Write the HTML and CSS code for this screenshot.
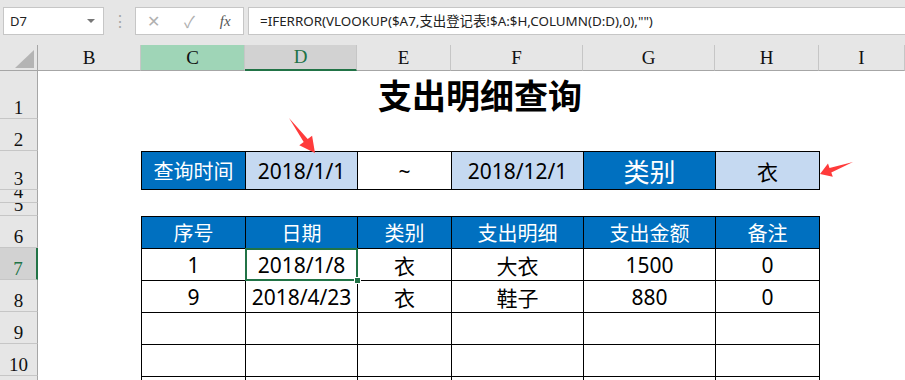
FILE: index.html
```html
<!DOCTYPE html>
<html lang="zh-CN">
<head>
    <meta charset="UTF-8">
    <meta name="viewport" content="width=device-width, initial-scale=1.0">
    <title>支出明细查询</title>
    <link rel="stylesheet" href="styles.css">
</head>
<body>
    <div class="toolbar">
        <div class="name-box">D7<span class="caret"></span></div>
        <div class="grip">⋮</div>
        <div class="fx-box">
            <span class="btn">✕</span>
            <span class="btn">✓</span>
            <span class="btn fx">fx</span>
        </div>
        <div class="formula">=IFERROR(VLOOKUP($A7,支出登记表!$A:$H,COLUMN(D:D),0),"")</div>
    </div>

    <div class="sheet">
        <div class="corner">
            <svg width="37" height="25" viewBox="0 0 37 25"><polygon points="34,5 34,23 15,23" fill="#b4b4b4"/></svg>
        </div>

        <div class="col-heads">
            <div class="col-head w-b">B</div>
            <div class="col-head w-c hover">C</div>
            <div class="col-head w-d sel">D</div>
            <div class="col-head w-e">E</div>
            <div class="col-head w-f">F</div>
            <div class="col-head w-g">G</div>
            <div class="col-head w-h">H</div>
            <div class="col-head w-i">I</div>
        </div>

        <div class="row-heads">
            <div class="row-head h48">1</div>
            <div class="row-head h32">2</div>
            <div class="row-head h39">3</div>
            <div class="row-head h13">4</div>
            <div class="row-head h13">5</div>
            <div class="row-head h32">6</div>
            <div class="row-head h32 sel">7</div>
            <div class="row-head h32">8</div>
            <div class="row-head h32">9</div>
            <div class="row-head h32">10</div>
            <div class="row-head h32"></div>
        </div>

        <div class="cells">
            <h1 class="title">支出明细查询</h1>

            <div class="query">
                <div class="cell blue">查询时间</div>
                <div class="cell pale">2018/1/1</div>
                <div class="cell">~</div>
                <div class="cell pale">2018/12/1</div>
                <div class="cell blue big">类别</div>
                <div class="cell pale">衣</div>
            </div>

            <div class="list">
                <div class="cell blue">序号</div>
                <div class="cell blue">日期</div>
                <div class="cell blue">类别</div>
                <div class="cell blue">支出明细</div>
                <div class="cell blue">支出金额</div>
                <div class="cell blue">备注</div>

                <div class="cell">1</div>
                <div class="cell cur">2018/1/8</div>
                <div class="cell">衣</div>
                <div class="cell">大衣</div>
                <div class="cell">1500</div>
                <div class="cell">0</div>

                <div class="cell">9</div>
                <div class="cell">2018/4/23</div>
                <div class="cell">衣</div>
                <div class="cell">鞋子</div>
                <div class="cell">880</div>
                <div class="cell">0</div>

                <div class="cell"></div><div class="cell"></div><div class="cell"></div>
                <div class="cell"></div><div class="cell"></div><div class="cell"></div>

                <div class="cell"></div><div class="cell"></div><div class="cell"></div>
                <div class="cell"></div><div class="cell"></div><div class="cell"></div>

                <div class="cell"></div><div class="cell"></div><div class="cell"></div>
                <div class="cell"></div><div class="cell"></div><div class="cell"></div>
            </div>
        </div>
    </div>

    <!-- red pointer arrows drawn over the sheet -->
    <svg class="marks" width="905" height="380" viewBox="0 0 905 380">
        <polygon points="289,118 307.7,139 312.1,135.7 315,153 299.3,145.3 303.7,142" />
        <polygon points="853,162 829.5,167.9 828,163.6 820,174 832.8,176.8 831.3,172.6" />
    </svg>
</body>
</html>
```

FILE: styles.css
```css
body {
    margin: 0;
    width: 905px;
    height: 380px;
    overflow: hidden;
    position: relative;
    background: #fff;
    font-family: "Noto Sans", "Noto Sans CJK SC", sans-serif;
}

/* formula bar */
.toolbar {
    height: 45px;
    box-sizing: border-box;
    padding: 7px 0 0 3px;
    background: #e6e6e6;
    display: flex;
    align-items: flex-start;
}
.name-box {
    width: 101px;
    height: 28px;
    box-sizing: border-box;
    border: 1px solid #c6c6c6;
    background: #fff;
    display: flex;
    align-items: center;
    justify-content: space-between;
    padding: 0 8px 0 6px;
    font-size: 13px;
    color: #222;
}
.caret {
    border-left: 4px solid transparent;
    border-right: 4px solid transparent;
    border-top: 4px solid #777;
}
.grip {
    width: 31px;
    text-align: center;
    line-height: 28px;
    font-size: 16px;
    color: #a6a6a6;
}
.fx-box {
    width: 109px;
    height: 28px;
    box-sizing: border-box;
    border: 1px solid #c6c6c6;
    background: #fff;
    display: flex;
    align-items: center;
}
.btn {
    width: 36px;
    text-align: center;
    font-size: 16px;
    color: #b0b0b0;
}
.fx {
    font-family: "Liberation Serif", serif;
    font-style: italic;
    font-size: 15px;
    color: #555;
}
.formula {
    flex: 1;
    height: 28px;
    box-sizing: border-box;
    margin: 0 -2px 0 4px;
    border: 1px solid #c6c6c6;
    background: #fff;
    padding-left: 11px;
    line-height: 26px;
    font-size: 13.4px;
    color: #222;
    white-space: nowrap;
}

/* sheet frame */
.sheet {
    display: grid;
    grid-template-columns: 38px 1fr;
    grid-template-rows: 26px auto;
}
.corner {
    background: #e6e6e6;
    box-sizing: border-box;
    border-right: 1px solid #a6a6a6;
    border-bottom: 1px solid #a6a6a6;
}
.corner svg {
    display: block;
}
.col-heads {
    display: flex;
}
.col-head {
    height: 26px;
    box-sizing: border-box;
    background: #e6e6e6;
    border-right: 1px solid #c6c6c6;
    border-bottom: 1px solid #a6a6a6;
    display: flex;
    align-items: center;
    justify-content: center;
    font-family: "Liberation Serif", serif;
    font-size: 19px;
    color: #111;
}
.w-b { width: 103px; }
.w-c { width: 104px; }
.w-d { width: 112px; }
.w-e { width: 94px; }
.w-f { width: 132px; }
.w-g { width: 132px; }
.w-h { width: 104px; }
.w-i { flex: 1; }
.col-head.hover {
    background: #9fd5b7;
}
.col-head.sel {
    background: #d2d2d2;
    color: #217346;
    border-bottom: 2px solid #217346;
}

.row-heads {
    display: flex;
    flex-direction: column;
}
.row-head {
    box-sizing: border-box;
    background: #e6e6e6;
    border-right: 1px solid #a6a6a6;
    border-bottom: 1px solid #c6c6c6;
    display: flex;
    align-items: flex-end;
    justify-content: center;
    overflow: hidden;
    padding-bottom: 1px;
    font-family: "Liberation Serif", serif;
    font-size: 19px;
    line-height: 19px;
    color: #111;
}
.row-head.sel {
    background: #d2d2d2;
    color: #217346;
    border-right: 2px solid #217346;
}
.h48 { height: 48px; }
.h39 { height: 39px; }
.h32 { height: 32px; }
.h13 { height: 13px; }

/* worksheet contents */
.cells {
    display: grid;
    grid-template-columns: 103px 104px 112px 94px 132px 132px 104px 1fr;
    grid-template-rows: 48px 32px 39px 13px 13px 193px;
}
.title {
    grid-row: 1;
    grid-column: 2 / 8;
    margin: 0;
    text-align: center;
    font-family: "Noto Sans CJK SC", sans-serif;
    font-size: 34px;
    font-weight: 700;
    line-height: 48px;
    color: #000;
}
.query,
.list {
    grid-column: 2 / 8;
    justify-self: start;
    align-self: start;
    display: grid;
    grid-template-columns: 103px 111px 93px 131px 131px 103px;
    gap: 1px;
    border: 1px solid #000;
    background: #000;
}
.query {
    grid-row: 3;
    grid-auto-rows: 37px;
}
.list {
    grid-row: 6;
    grid-auto-rows: 31px;
}
.cell {
    background: #fff;
    display: flex;
    align-items: center;
    justify-content: center;
    font-size: 21px;
    color: #000;
    white-space: nowrap;
}
.cell.blue {
    background: #0070c0;
    color: #fff;
    font-size: 20px;
}
.cell.pale {
    background: #c5d9f1;
}
.cell.blue.big {
    font-size: 26px;
}
.cell.cur {
    position: relative;
    outline: 2px solid #217346;
    outline-offset: -1px;
}
.cell.cur::after {
    content: "";
    position: absolute;
    right: -4px;
    bottom: -4px;
    width: 5px;
    height: 5px;
    background: #217346;
    border: 1px solid #fff;
}

.marks {
    position: absolute;
    left: 0;
    top: 0;
    pointer-events: none;
    fill: #ff3b3b;
}
```
